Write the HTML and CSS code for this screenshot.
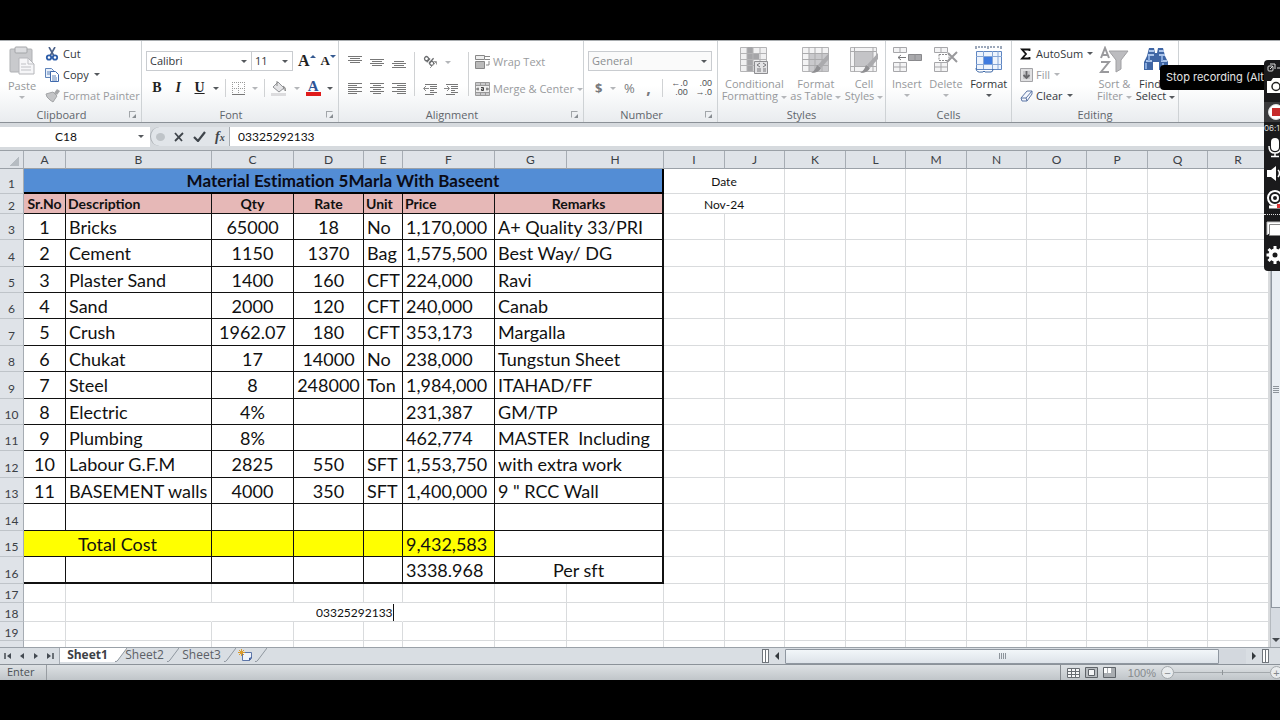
FILE: index.html
```
<!DOCTYPE html>
<html lang="en">
<head>
<meta charset="utf-8">
<title>Material Estimation</title>
<link rel="stylesheet" href="styles.css">
</head>
<body>
<main class="app">
<div class="ribbon">
  <section class="group g-clip">
    <div class="body">
      <button class="big off"><svg width="28" height="30" viewBox="0 0 28 30"><rect x="2" y="3" width="22" height="23" rx="1" fill="#c9cacd" stroke="#aeb0b3"/><rect x="7" y="1" width="12" height="6" rx="1" fill="#dcdde0" stroke="#a3a5a8"/><path d="M11 12h9l6 6v10h-15z" fill="#f6f6f8" stroke="#b5b6ba"/><path d="M20 12v6h6M13 18h5M13 21h10M13 24h10" fill="none" stroke="#c0c1c5"/></svg><span>Paste</span><i class="dn"></i></button>
      <div class="stack">
        <button class="tool"><svg width="16" height="14" viewBox="0 0 16 14"><path d="M4 0l5 9M10 0L5 9" stroke="#4b6189" stroke-width="1.6"/><circle cx="4" cy="10.500" r="2.200" fill="none" stroke="#2c5ca8" stroke-width="1.800"/><circle cx="10" cy="10.500" r="2.200" fill="none" stroke="#2c5ca8" stroke-width="1.800"/></svg>Cut</button>
        <button class="tool"><svg width="16" height="14" viewBox="0 0 16 14"><path d="M.5.500h6l2 2v7h-8z" fill="#e8f0fb" stroke="#5f83b9"/><path d="M2 4h4M2 6h3" stroke="#5f83b9"/><path d="M5.500 3.500h5l3 3v7h-8z" fill="#fff" stroke="#3f69ac"/><path d="M7 8h4M7 10h5M7 12h5" stroke="#5f83b9"/></svg>Copy<i class="dn"></i></button>
        <button class="tool off"><svg width="16" height="14" viewBox="0 0 16 14"><path d="M9 4l3-4 3 2-3 4z" fill="#a6a7a9"/><path d="M1 5l7-2 4 4-4 6-3-2-3-3z" fill="#c3c4c6" stroke="#a3a5a7"/></svg>Format Painter</button>
      </div>
    </div>
    <h2>Clipboard</h2><span class="launch"></span>
  </section>
  <section class="group g-font">
    <div class="lines">
      <div class="line">
        <label class="drop"><select class="font-name" aria-label="Font"><option>Calibri</option></select></label><label class="drop"><select class="font-size" aria-label="Font size"><option>11</option></select></label>
        <button class="glyph grow" aria-label="Grow font">A<i class="up"></i></button>
        <button class="glyph shrink" aria-label="Shrink font">A<i class="dnb"></i></button>
      </div>
      <div class="line spread">
        <button class="glyph biu">B</button><button class="glyph biu it">I</button><button class="glyph biu un">U</button><i class="dn"></i><span class="sep"></span>
        <button aria-label="Borders"><svg width="13" height="13" viewBox="0 0 13 13"><path d="M.5 0v12M6.500 0v12M12.500 0v12M0 .5h13M0 6.500h13" stroke="#9a9a9a" stroke-dasharray="1 1"/><path d="M0 12.500h13" stroke="#777"/></svg></button><i class="dn pale"></i><span class="sep"></span>
        <button aria-label="Fill color"><svg width="16" height="15" viewBox="0 0 16 15"><path d="M2 6l5-5 6 6-5 4z" fill="#e4e4e6" stroke="#909296"/><path d="M6 0v5M12 5q3 1 2.500 5q-2-1-1.500-4" fill="none" stroke="#888"/><path d="M0 12h15v3H0z" fill="#dcdcde"/></svg></button><i class="dn pale"></i>
        <button class="glyph fc" aria-label="Font color">A</button><i class="dn"></i>
      </div>
    </div>
    <h2>Font</h2><span class="launch"></span>
  </section>
  <section class="group g-align">
    <div class="cols">
      <div class="pad3">
        <button aria-label="Top align"><svg width="14" height="14" viewBox="0 0 14 14"><path d="M0 1.500h14M2 3.500h10M0 5.500h14M2 7.500h10" stroke="#777"/></svg></button>
        <button aria-label="Middle align"><svg width="14" height="14" viewBox="0 0 14 14"><path d="M0 4.500h14M2 6.500h10M0 8.500h14M2 10.500h10" stroke="#777"/></svg></button>
        <button aria-label="Bottom align"><svg width="14" height="14" viewBox="0 0 14 14"><path d="M2 6.500h10M0 8.500h14M2 10.500h10M0 12.500h14" stroke="#777"/></svg></button>
        <button aria-label="Align left"><svg width="14" height="12" viewBox="0 0 14 12"><path d="M0 .5h14M0 2.500h9M0 4.500h14M0 6.500h9M0 8.500h14M0 10.500h9" stroke="#777"/></svg></button>
        <button aria-label="Center"><svg width="14" height="12" viewBox="0 0 14 12"><path d="M0 .5h14M3 2.500h8M0 4.500h14M3 6.500h8M0 8.500h14M3 10.500h8" stroke="#777"/></svg></button>
        <button aria-label="Align right"><svg width="14" height="12" viewBox="0 0 14 12"><path d="M0 .5h14M5 2.500h9M0 4.500h14M5 6.500h9M0 8.500h14M5 10.500h9" stroke="#777"/></svg></button>
      </div>
      <span class="sep"></span>
      <div class="pad2">
        <div class="line"><button aria-label="Orientation"><svg width="16" height="14" viewBox="0 0 16 14"><g fill="none" stroke="#6c6e70" stroke-width="1.300" transform="rotate(42 5 5)"><circle cx="3" cy="5" r="2"/><path d="M5.500 2.500v5M8 0v7"/><circle cx="10" cy="5" r="2"/></g><path d="M7 13l6-6M13.500 9.500v-3h-3" stroke="#999" fill="none"/></svg></button><i class="dn pale"></i></div>
        <div class="line"><button aria-label="Decrease indent"><svg width="15" height="13" viewBox="0 0 15 13"><path d="M2 1.500h12M7 3.500h7M7 5.500h7M7 7.500h4M7 9.500h7M2 11.500h9" stroke="#777"/><path d="M6 5.500H1M3 3L.5 5.500 3 8" stroke="#888" fill="none"/></svg></button><button aria-label="Increase indent"><svg width="15" height="13" viewBox="0 0 15 13"><path d="M2 1.500h12M7 3.500h7M7 5.500h7M7 7.500h4M7 9.500h7M2 11.500h9" stroke="#777"/><path d="M0 5.500h5M3 3l2.500 2.500L3 8" stroke="#888" fill="none"/></svg></button></div>
      </div>
      <span class="sep"></span>
      <div class="pad1">
        <button class="tool off"><svg width="15" height="14" viewBox="0 0 15 14"><path d="M.5.5h9v4h-9z" fill="#eee" stroke="#888"/><path d="M10 1.500h5M10 4.500h5M14 6v4h-3" stroke="#888" fill="none"/><path d="M.5 6.500h9v7h-9z" fill="#bbb" stroke="#888"/></svg>Wrap Text</button>
        <button class="tool off"><svg width="15" height="14" viewBox="0 0 15 14"><path d="M.5.500h14v13h-14z" fill="#c9c9cb" stroke="#999"/><path d="M1 4h13v6H1z" fill="#efefef"/><path d="M0 3.500h15M0 10.500h15M5.500 0v3M10.500 0v3M5.500 11v3M10.500 11v3" stroke="#999"/><path d="M1 7h3M11 7h3M3 5.500v3M12 5.500v3" stroke="#666"/><path d="M6 5.500h2.500v3H6.500v-1.500h2" fill="none" stroke="#444"/></svg>Merge &amp; Center<i class="dn pale"></i></button>
      </div>
    </div>
    <h2>Alignment</h2><span class="launch"></span>
  </section>
  <section class="group g-num">
    <div class="lines">
      <label class="drop general"><select aria-label="Number format"><option>General</option></select></label>
      <div class="line spread num">
        <button>$</button><i class="dn pale"></i><button class="pc">%</button><button class="comma">,</button><span class="sep"></span>
        <button class="dec"><span>←.0</span><span>.00</span></button><button class="dec"><span>.00</span><span>→.0</span></button>
      </div>
    </div>
    <h2>Number</h2><span class="launch"></span>
  </section>
  <section class="group g-styles">
    <div class="body">
      <button class="big off"><svg width="30" height="28" viewBox="0 0 30 28"><path d="M1.500 1.500h26v24h-26z" fill="#f0f0f1" stroke="#b4b4b6"/><path d="M8 1h6v24H8zM14 8h6v6h-6z" fill="#a5a5a8"/><path d="M1 7.500h26M1 13.500h26M1 19.500h26M8 1v25M14 1v25M21 1v25" stroke="#b4b4b6" fill="none"/><path d="M15.500 15.500h13v12h-13z" fill="#e3e3e5" stroke="#8e8e91"/><path d="M21 17l-3 2 3 2M18 23h4M18 25h4M24 17l3 2-3 2M24 23h3M24 25h3" stroke="#77777a" fill="none"/></svg><span>Conditional<br>Formatting<i class="dn"></i></span></button>
      <button class="big off"><svg width="30" height="28" viewBox="0 0 30 28"><path d="M1.500 1.500h26v24h-26z" fill="#f3f3f4" stroke="#b4b4b6"/><path d="M8 7h19v18H8z" fill="#c9c9cc"/><path d="M1 7.500h26M1 13.500h26M1 19.500h26M8 1v25M14 1v25M21 1v25" stroke="#ababad" fill="none"/><path d="M28 7v6l-8 9-3-3z" fill="#aaaaad"/><path d="M16 19l4 3q-2 5-10 5 4-2 6-8z" fill="#8f8f92"/></svg><span>Format<br>as Table<i class="dn"></i></span></button>
      <button class="big off"><svg width="30" height="28" viewBox="0 0 30 28"><path d="M1.500 1.500h26v24h-26z" fill="#f3f3f4" stroke="#b4b4b6"/><path d="M6 6h18v14H6z" fill="#c4c4c7"/><path d="M1 5.500h26M1 20.500h26M5.500 1v25M24 1v25" stroke="#ababad" fill="none"/><path d="M29 7v6l-8 9-3-3z" fill="#aaaaad"/><path d="M17 19l4 3q-2 5-10 5 4-2 6-8z" fill="#8f8f92"/></svg><span>Cell<br>Styles<i class="dn"></i></span></button>
    </div>
    <h2>Styles</h2>
  </section>
  <section class="group g-cells">
    <div class="body">
      <button class="big off"><svg width="30" height="28" viewBox="0 0 30 28"><path d="M1.500 1.500h13v5h-13zM8 1v6M1.500 16.500h13v9h-13zM1 21h14M8 16v10" fill="#f4f4f5" stroke="#a7a7aa"/><path d="M16.500 8.500h13v6h-13z" fill="#a9a9ac" stroke="#89898c"/><path d="M23 8v7" stroke="#909093"/><path d="M14 11.500H6M9 9l-3 2.500L9 14" stroke="#77777a" fill="none"/></svg><span>Insert</span><i class="dn"></i></button>
      <button class="big off"><svg width="30" height="28" viewBox="0 0 30 28"><path d="M3.500 1.500h13v5h-13zM10 1v6M3.500 16.500h13v9h-13zM3 21h14M10 16v10" fill="#f4f4f5" stroke="#a7a7aa"/><path d="M8 8.500h10v6H8z" fill="none" stroke="#88888b" stroke-dasharray="2 1"/><path d="M17 7l9 9M26 6l-10 10" stroke="#99999c" stroke-width="2"/></svg><span>Delete</span><i class="dn"></i></button>
      <button class="big"><svg width="30" height="28" viewBox="0 0 30 28"><path d="M2 0v3M5 0v2M8 0v2M11 0v2M14 0v3M17 0v2M20 0v2M24 0v2M27 0v3" stroke="#3b5276"/><path d="M2.500 5.500h25v18h-25z" fill="#eef4fd" stroke="#5f86c2"/><path d="M2 10.500h26M2 18.500h26M9.500 5v18M18.500 5v18M24 5v18" stroke="#86a6d6" fill="none"/><path d="M10 11h8v7h-8z" fill="#3f7be0"/><path d="M2 22q0 5 6 4h1q1-2 2 0h6q2 0 2-3" fill="none" stroke="#3e68a6"/></svg><span>Format</span><i class="dn"></i></button>
    </div>
    <h2>Cells</h2>
  </section>
  <section class="group g-edit">
    <div class="body">
      <div class="stack">
        <button class="tool"><svg width="13" height="14" viewBox="0 0 13 14"><path d="M9.500 4V2.500H2l4 4.500-4 4.500h7.500V10" fill="none" stroke="#111" stroke-width="1.800"/></svg>AutoSum<i class="dn"></i></button>
        <button class="tool off"><svg width="13" height="14" viewBox="0 0 13 14"><path d="M.5.500h12v13H.5z" fill="#e0e0e2" stroke="#a3a3a6"/><path d="M3 3h7v8H3z" fill="#c5c5c8"/><path d="M6.500 3v6M3.500 7l3 3 3-3" stroke="#66666a" stroke-width="1.800" fill="none"/></svg>Fill<i class="dn"></i></button>
        <button class="tool"><svg width="13" height="14" viewBox="0 0 13 14"><path d="M1 9l6-7h5v3l-5 7H2z" fill="#f4f7fd" stroke="#5d76a5"/><path d="M1 9h5l1 3M6 9l6-7" fill="none" stroke="#5d76a5"/></svg>Clear<i class="dn"></i></button>
      </div>
      <button class="big off"><svg width="30" height="28" viewBox="0 0 30 28"><path d="M2 12L6 2l4 10M3.500 9h5M2 16h8L2 26h8" stroke="#9a9a9d" stroke-width="2" fill="none"/><path d="M10 5h19l-7 9v9l-5 3V14z" fill="#bcbcbf" stroke="#a0a0a3"/></svg><span>Sort &amp;<br>Filter<i class="dn"></i></span></button>
      <button class="big"><svg width="30" height="28" viewBox="0 0 30 28"><path d="M8 2h5l1 5h2l1-5h5l2 8 3 6v8h-9v-8h-6v8H3v-8l3-6z" fill="#3f66a5"/><path d="M8 5h5M18 5h5M7 9h6M18 9h6M5 15h6M20 15h6" stroke="#a9c3ea" stroke-width="2"/><path d="M5 17v6M8 10v5M21 10v5M22 17v6" stroke="#86a8dc" stroke-width="2"/></svg><span>Find &amp;<br>Select<i class="dn"></i></span></button>
    </div>
    <h2>Editing</h2>
  </section>
</div>

<div class="formula">
  <label class="drop namebox"><input value="C18" aria-label="Name box"></label>
  <div class="fx"><i class="knob"></i>
    <button aria-label="Cancel"><svg width="10" height="10" viewBox="0 0 10 10"><path d="M1 1l7 8M9 1L1 9" stroke="#3f454b" stroke-width="1.800"/></svg></button>
    <button aria-label="Enter"><svg width="13" height="11" viewBox="0 0 13 11"><path d="M1 6l4 4 7-9" stroke="#3f454b" stroke-width="2.200" fill="none"/></svg></button>
    <button class="fxb">f<small>x</small></button>
  </div>
  <input class="finput" value="03325292133" aria-label="Formula bar">
</div>

<div class="sheet">
<div class="grid">
<table>
<colgroup><col class="w24"><col class="w42"><col class="w146"><col class="w82"><col class="w70"><col class="w39"><col class="w92"><col class="w72"><col class="w97"><col class="w61"><col class="w60"><col class="w61"><col class="w60"><col class="w61"><col class="w60"><col class="w60"><col class="w61"><col class="w60"><col class="w61"><col></colgroup>
<thead><tr><th class="corner"><i></i><th>A<th>B<th>C<th>D<th>E<th>F<th>G<th>H<th>I<th>J<th>K<th>L<th>M<th>N<th>O<th>P<th>Q<th>R<th></thead>
<tbody>
<tr class="r25"><th>1<td class="title" colspan="8">Material Estimation 5Marla With Baseent<td class="note" colspan="2">Date<td><td><td><td><td><td><td><td><td></tr>
<tr class="r20 head"><th>2<td class="k c">Sr.No<td class="k">Description<td class="k c">Qty<td class="k c">Rate<td class="k">Unit<td class="k">Price<td class="k e c" colspan="2">Remarks<td class="note" colspan="2">Nov-24<td><td><td><td><td><td><td><td><td></tr>
<tr class="r26"><th>3<td class="k c">1<td class="k">Bricks<td class="k c">65000<td class="k c">18<td class="k">No<td class="k">1,170,000<td class="k e" colspan="2">A+ Quality 33/PRI<td><td><td><td><td><td><td><td><td><td><td></tr>
<tr class="r27"><th>4<td class="k c">2<td class="k">Cement<td class="k c">1150<td class="k c">1370<td class="k">Bag<td class="k">1,575,500<td class="k e" colspan="2">Best Way/ DG<td><td><td><td><td><td><td><td><td><td><td></tr>
<tr class="r26"><th>5<td class="k c">3<td class="k">Plaster Sand<td class="k c">1400<td class="k c">160<td class="k">CFT<td class="k">224,000<td class="k e" colspan="2">Ravi<td><td><td><td><td><td><td><td><td><td><td></tr>
<tr class="r26"><th>6<td class="k c">4<td class="k">Sand<td class="k c">2000<td class="k c">120<td class="k">CFT<td class="k">240,000<td class="k e" colspan="2">Canab<td><td><td><td><td><td><td><td><td><td><td></tr>
<tr class="r27"><th>7<td class="k c">5<td class="k">Crush<td class="k c">1962.07<td class="k c">180<td class="k">CFT<td class="k">353,173<td class="k e" colspan="2">Margalla<td><td><td><td><td><td><td><td><td><td><td></tr>
<tr class="r26"><th>8<td class="k c">6<td class="k">Chukat<td class="k c">17<td class="k c">14000<td class="k">No<td class="k">238,000<td class="k e" colspan="2">Tungstun Sheet<td><td><td><td><td><td><td><td><td><td><td></tr>
<tr class="r27"><th>9<td class="k c">7<td class="k">Steel<td class="k c">8<td class="k c">248000<td class="k">Ton<td class="k">1,984,000<td class="k e" colspan="2">ITAHAD/FF<td><td><td><td><td><td><td><td><td><td><td></tr>
<tr class="r26"><th>10<td class="k c">8<td class="k">Electric<td class="k c">4%<td class="k"><td class="k"><td class="k">231,387<td class="k e" colspan="2">GM/TP<td><td><td><td><td><td><td><td><td><td><td></tr>
<tr class="r26"><th>11<td class="k c">9<td class="k">Plumbing<td class="k c">8%<td class="k"><td class="k"><td class="k">462,774<td class="k e" colspan="2">MASTER&nbsp; Including<td><td><td><td><td><td><td><td><td><td><td></tr>
<tr class="r27"><th>12<td class="k c">10<td class="k">Labour G.F.M<td class="k c">2825<td class="k c">550<td class="k">SFT<td class="k">1,553,750<td class="k e" colspan="2">with extra work<td><td><td><td><td><td><td><td><td><td><td></tr>
<tr class="r26"><th>13<td class="k c">11<td class="k">BASEMENT walls<td class="k c">4000<td class="k c">350<td class="k">SFT<td class="k">1,400,000<td class="k e" colspan="2">9 " RCC Wall<td><td><td><td><td><td><td><td><td><td><td></tr>
<tr class="r27"><th>14<td class="k"><td class="k"><td class="k"><td class="k"><td class="k"><td class="k"><td class="k e" colspan="2"><td><td><td><td><td><td><td><td><td><td><td></tr>
<tr class="r26"><th>15<td class="k y c" colspan="2">Total Cost<td class="k y"><td class="k y"><td class="k y"><td class="k y">9,432,583<td class="k e" colspan="2"><td><td><td><td><td><td><td><td><td><td><td></tr>
<tr class="r27 last"><th>16<td class="k"><td class="k"><td class="k"><td class="k"><td class="k"><td class="k">3338.968<td class="k e c" colspan="2">Per sft<td><td><td><td><td><td><td><td><td><td><td></tr>
<tr class="r19"><th>17<td><td><td><td><td><td><td><td><td><td><td><td><td><td><td><td><td><td><td></tr>
<tr class="r19"><th>18<td><td class="open"><td class="edit" colspan="3"><input value="03325292133" aria-label="Cell C18"><td><td><td><td><td><td><td><td><td><td><td><td><td><td></tr>
<tr class="r19"><th>19<td><td><td><td><td><td><td><td><td><td><td><td><td><td><td><td><td><td><td></tr>
<tr class="r19"><th><td><td><td><td><td><td><td><td><td><td><td><td><td><td><td><td><td><td><td></tr>
</tbody>
</table>
</div>
<div class="vscroll"><div class="vthumb"><i class="grip"></i></div><i class="dnb"></i></div>
</div>

<div class="tabs">
  <div class="nav">
    <button aria-label="First sheet"><svg width="8" height="8" viewBox="0 0 8 8"><path d="M1 1v6" stroke="#444b52" stroke-width="1.500"/><path d="M7 1v6L3 4z" fill="#444b52"/></svg></button>
    <button aria-label="Previous sheet"><svg width="8" height="8" viewBox="0 0 8 8"><path d="M6 1v6L2 4z" fill="#444b52"/></svg></button>
    <button aria-label="Next sheet"><svg width="8" height="8" viewBox="0 0 8 8"><path d="M2 1v6l4-3z" fill="#444b52"/></svg></button>
    <button aria-label="Last sheet"><svg width="8" height="8" viewBox="0 0 8 8"><path d="M7 1v6" stroke="#444b52" stroke-width="1.500"/><path d="M1 1v6l4-3z" fill="#444b52"/></svg></button>
  </div>
  <button class="tab on">Sheet1</button><svg class="first" width="12" height="14" viewBox="0 0 12 14"><path d="M0 0h12L3 12q-1 1-3 1z" fill="#fff"/><path d="M12 0L3 12q-1 2-3 1.500" fill="none" stroke="#8f979f"/></svg>
  <button class="tab">Sheet2</button><svg width="12" height="14" viewBox="0 0 12 14"><path d="M12 0L3 12q-1 2-3 1.500" fill="none" stroke="#8f979f"/></svg>
  <button class="tab">Sheet3</button><svg width="12" height="14" viewBox="0 0 12 14"><path d="M12 0L3 12q-1 2-3 1.500" fill="none" stroke="#8f979f"/></svg>
  <button class="tab new" aria-label="Insert sheet"><svg width="15" height="13" viewBox="0 0 15 13"><path d="M4.500 3.500h9v6l-2 2h-7z" fill="#eef3fb" stroke="#5d76a8"/><path d="M14 8l-3 4v-3z" fill="#34559a"/><path d="M3.500 0v7M0 3.500h7M1 1l5 5M6 1L1 6" stroke="#d99a2b"/></svg></button><svg width="12" height="14" viewBox="0 0 12 14"><path d="M12 0L3 12q-1 2-3 1.500" fill="none" stroke="#8f979f"/></svg>
  <div class="hscroll"><i class="split"></i><svg width="16" height="10" viewBox="0 0 16 10"><path d="M10 1v8L6 5z" fill="#33383d"/></svg><div class="htrack"><div class="hthumb"><i class="grip v"></i></div></div><svg width="16" height="10" viewBox="0 0 16 10"><path d="M6 1v8l4-4z" fill="#33383d"/></svg><i class="split"></i></div>
</div>

<div class="status">
  <span class="mode">Enter</span>
  <div class="views">
    <button aria-label="Normal"><svg width="13" height="10" viewBox="0 0 13 10"><path d="M.5.500h12v9H.5zM0 3.500h13M0 6.500h13M4.500 0v10M8.500 0v10" fill="#f6f7f8" stroke="#686d72"/></svg></button>
    <button aria-label="Page layout"><svg width="13" height="11" viewBox="0 0 13 11"><path d="M.5.500h12v10H.5z" fill="#b9bdc1" stroke="#5f6469"/><path d="M3.500 2.500h6v6h-6z" fill="#f5f6f7" stroke="#5f6469"/></svg></button>
    <button aria-label="Page break preview"><svg width="13" height="11" viewBox="0 0 13 11"><path d="M.5.500h12v10H.5z" fill="#a9adb1" stroke="#5f6469"/><path d="M1 1h3v5H1zM5 1h3v5H5z" fill="#fff"/></svg></button>
    <span class="zoomv">100%</span>
    <button class="round" aria-label="Zoom out">−</button><i class="rail"></i><button class="round" aria-label="Zoom in">+</button>
  </div>
</div>

<div class="tip">Stop recording (Alt</div>
<aside class="rec">
  <svg width="24" height="12" viewBox="0 0 24 12"><rect x="4" y="4" width="5" height="5" rx="1" fill="none" stroke="#ddd"/><path d="M6 2h5v5M6 7l3-3M13 6h5" stroke="#ddd" fill="none"/></svg>
  <svg width="24" height="20" viewBox="0 0 24 20"><path d="M3 5h4l2-3h8l2 3h4v12H3z" fill="#fff"/><circle cx="12" cy="10.500" r="4" fill="#fff" stroke="#222" stroke-width="1.500"/></svg>
  <div class="stop"><svg width="24" height="20" viewBox="0 0 24 20"><circle cx="12" cy="10" r="7.500" fill="#fff" stroke="#ddd"/><rect x="8" y="6" width="9" height="8" fill="#c62a2a"/></svg></div>
  <span>06:1</span>
  <svg width="24" height="20" viewBox="0 0 24 20"><rect x="7" y="0" width="8" height="13" rx="4" fill="#fff"/><path d="M5 8q0 7 6 7t6-7M11 15v3M7 18.500h8" stroke="#fff" stroke-width="1.500" fill="none"/></svg>
  <svg width="24" height="20" viewBox="0 0 24 20"><path d="M3 6h4l5-4v15l-5-4H3z" fill="#fff"/><path d="M14 6q3 3 0 7" stroke="#fff" stroke-width="1.500" fill="none"/></svg>
  <svg width="24" height="20" viewBox="0 0 24 20"><circle cx="11" cy="8" r="7" fill="none" stroke="#fff" stroke-width="2"/><circle cx="11" cy="8" r="3" fill="none" stroke="#fff" stroke-width="2"/><path d="M5 17h12" stroke="#fff" stroke-width="3"/><path d="M13 14h5v4h-5z" fill="#d33"/></svg>
  <i class="dots"></i>
  <svg width="24" height="20" viewBox="0 0 24 20"><path d="M3 16V3h15v3" fill="#fff" stroke="#bbb"/><path d="M5.500 5.500h16v11h-16z" fill="#fff" stroke="#888"/></svg>
  <svg width="24" height="20" viewBox="0 0 24 20"><circle cx="11" cy="10" r="4.500" fill="none" stroke="#fff" stroke-width="4"/><path d="M11 1v4M11 15v4M2.500 10h4M16 10h4M4.500 4l3 3M15 14l3 3M4.500 16l3-3M15 6l3-3" stroke="#fff" stroke-width="3"/></svg>
</aside>
</main>
</body>
</html>
```
FILE: styles.css
```
* { box-sizing: border-box; font-variant-ligatures: none; }
body {
  margin: 0;
  padding: 40px 0;
  height: 100vh;
  background: #000;
  font: 11px/12px "Open Sans", "Noto Sans", sans-serif;
  color: #33373b;
  overflow: hidden;
}
button, select, input { font: inherit; color: inherit; background: none; border: 0; padding: 0; margin: 0; border-radius: 0; appearance: none; outline: 0; }
button { display: flex; align-items: center; white-space: nowrap; }
svg { flex: none; display: block; }
.app { position: relative; display: flex; flex-direction: column; height: 100%; background: #d6dade; overflow: hidden; }

/* ribbon */
.ribbon { display: flex; flex: none; height: 83px; border-top: 1px solid #a9adb0; border-bottom: 1px solid #8b9197; background: linear-gradient(#fff 55%, #e9ecef); }
.group { position: relative; display: flex; flex-direction: column; flex: none; height: 81px; border-right: 1px solid #ced2d5; padding-top: 2px; }
.group h2 { margin: auto 0 0; font: inherit; line-height: 14px; text-align: center; color: #5f656b; }
.g-clip { width: 142px; }
.g-font { width: 197px; }
.g-align { width: 245px; }
.g-num { width: 134px; }
.g-styles { width: 168px; }
.g-cells { width: 126px; }
.g-edit { width: 167px; }
.g-clip h2, .g-font h2, .g-align h2, .g-num h2 { padding-right: 18px; }
.body { display: flex; padding: 0 0 0 2px; justify-content: space-around; }
.g-clip .body { justify-content: start; gap: 9px; padding-left: 8px; }
.g-edit .body { justify-content: start; gap: 4px; padding-left: 8px; }
.stack { display: flex; flex-direction: column; }
.g-edit .stack { width: 73px; }
.tool { gap: 2px; height: 21px; }
.g-edit .tool { gap: 3px; }
.g-edit .tool .dn { margin: 0 1px; }
.off { color: #999b9e; }
.big { flex-direction: column; padding-top: 3px; color: #33373b; line-height: 12px; gap: 2px; }
.big.off { color: #96989b; }
.big > span { padding-top: 2px; }
.big i { display: inline-block; }
.dn { flex: none; border: 3px solid transparent; border-top-color: #55595d; border-bottom: 0; margin: 0 3px; vertical-align: middle; }
.dn.pale, .off .dn { border-top-color: #b4b6b9; }
.big span .dn { margin-right: 0; }
.big > .dn { margin: 2px 0; }
.dnb { border: 4px solid transparent; border-top-color: #44494e; border-bottom: 0; }
.launch { position: absolute; right: 5px; bottom: 4px; width: 7px; height: 7px; border: 1px solid #a2a6aa; border-right-color: transparent; border-bottom-color: transparent; }
.launch::after { content: ""; position: absolute; right: -1px; bottom: -1px; border: 2px solid #888d92; border-top-color: transparent; border-left-color: transparent; }
.sep { width: 1px; height: 18px; background: #d0d2d4; flex: none; }

.lines { display: flex; flex-direction: column; gap: 7px; padding: 8px 5px 0 4px; }
.line { display: flex; align-items: center; height: 20px; }
.spread { justify-content: space-between; padding: 0 0 0 4px; }
.drop { position: relative; display: block; height: 20px; border: 1px solid #c9ccd0; background: #fff; }
.drop + .drop { border-left: 0; }
.drop::after { content: ""; position: absolute; right: 4px; top: 8px; border: 3px solid transparent; border-top-color: #55595d; border-bottom: 0; pointer-events: none; }
.drop select { display: block; height: 18px; padding-left: 3px; }
.font-name { width: 104px; }
.font-size { width: 40px; }
.glyph { font: bold 14px/18px "Liberation Serif", serif; color: #222; }
.biu { width: 14px; justify-content: center; }
.spread .biu + .biu { margin-left: 1px; }
.grow { font-size: 16px; margin-left: 5px; }
.shrink { font-size: 13px; margin-left: 5px; }
.grow i, .shrink i { border-width: 3px; margin-bottom: 10px; }
.up { border: 3px solid transparent; border-bottom-color: #355a91; }
.grow .up { border-top: 0; }
.shrink .dnb { border-top-color: #355a91; border-bottom: 0; }
.it { font-style: italic; }
.un { text-decoration: underline; }
.fc { font-size: 15px; color: #2f5597; border-bottom: 4px solid #e01b1b; line-height: 12px; padding: 0 2px; }
.spread .dn { margin: 0; }

.cols { display: flex; padding: 9px 0 0 9px; height: 62px; }
.cols > .sep { height: 44px; }
.pad3 { display: grid; grid-template-columns: repeat(3, 22px); grid-template-rows: 20px 26px; align-items: center; align-content: start; }
.pad3 button { height: 18px; }
.pad3 button:nth-child(n+4) { margin-top: 8px; }
.pad2 { width: 53px; padding-left: 8px; display: flex; flex-direction: column; gap: 7px; }
.pad2 .line { gap: 6px; }
.pad2 .dn { margin: 0; }
.pad1 { padding-left: 6px; display: flex; flex-direction: column; gap: 7px; }
.pad1 .tool { height: 20px; gap: 3px; }
.pad1 .dn { margin: 0; }

.general { color: #8b8e91; background: #fafafa; }
.general select { width: 100%; }
.num { font-weight: bold; color: #77797c; font-size: 13px; padding-left: 7px; }
.pc { font-weight: normal; }
.comma { width: 12px; justify-content: center; font-size: 16px; }
.dec { flex-direction: column; align-items: flex-end; font: 9px/9px "Liberation Sans", sans-serif; color: #505255; }

/* formula bar */
.formula { display: flex; flex: none; height: 28px; padding: 4px 0; background: #d6dade; border-bottom: 1px solid #9aa0a6; font: 12px/18px Lato, sans-serif; color: #111; }
.namebox { width: 150px; border: 0; }
.namebox input { width: 132px; height: 19px; text-align: center; }
.drop.namebox::after { right: 6px; }
.fx { display: flex; align-items: center; width: 80px; gap: 9px; padding-left: 5px; background: #e1e5e9; border-radius: 10px 0 0 10px; border: 1px solid #a9aeb3; border-width: 0 1px; flex: none; }
.knob { width: 9px; height: 8px; border-radius: 50%; background: #bfc4c8; }
.fxb { font: italic bold 14px/16px "Liberation Serif", serif; color: #3f454b; }
.fxb small { font-size: 10px; padding-top: 3px; }
.finput { flex: 1; min-width: 0; background: #fff; padding-left: 8px; }

/* sheet */
.sheet { display: flex; flex: 1; min-height: 0; background: #fff; }
.grid { flex: 1; min-width: 0; overflow: hidden; }
table { border-collapse: separate; border-spacing: 0; table-layout: fixed; width: 100%; }
.w24 { width: 24px; } .w42 { width: 42px; } .w146 { width: 146px; } .w82 { width: 82px; } .w70 { width: 70px; }
.w39 { width: 39px; } .w92 { width: 92px; } .w72 { width: 72px; } .w97 { width: 97px; } .w60 { width: 60px; } .w61 { width: 61px; }
th { background: #dfe3e8; font: 12px/14px Lato, sans-serif; color: #3b4045; padding: 0; border-right: 1px solid #a6acb3; border-bottom: 1px solid #9ba1a8; text-align: center; }
thead th { height: 18px; }
tbody th { border-bottom-color: #bfc4c9; vertical-align: bottom; }
.r25 th, .r26 th, .r27 th { padding-bottom: 2px; }
.corner i { display: block; margin: 2px 4px 0 auto; width: 10px; height: 10px; background: linear-gradient(135deg, transparent 50%, #b6bcc2 50%); }
td { padding: 0; border-right: 1px solid #d9dbdd; border-bottom: 1px solid #d9dbdd; white-space: nowrap; }
.r19 { height: 19px; } .r20 { height: 20px; } .r25 { height: 25px; } .r26 { height: 26px; } .r27 { height: 27px; }
td.k { border-color: #111; font: 18px/22px Lato, sans-serif; color: #111; padding-left: 3px; }
td.c { text-align: center; padding: 0; }
td.e { border-right-width: 2px; }
td.y { background: #ff0; }
td.title { background: #538dd5; border: solid #000; border-width: 0 2px 2px 0; font: bold 17px/20px Lato, sans-serif; color: #0b0b16; text-align: center; }
.head td.k { background: #e6b8b7; font: bold 14px/16px Lato, sans-serif; padding-left: 2px; }
.head td.c { padding: 0; }
.last td.k { border-bottom-width: 2px; }
td.note { font: 12px/16px Lato, sans-serif; color: #111; text-align: center; padding-top: 2px; }
td.title, td.k, td.note, th, .edit input { font-variant-ligatures: none; }
td.open, td.edit { border-right-color: transparent; }
.edit input { display: block; margin: 0 8px 0 auto; width: 78px; height: 17px; border-right: 1px solid #111; font: 12px/16px Lato, sans-serif; color: #111; }
.vscroll { display: flex; flex-direction: column; flex: none; width: 10px; padding-bottom: 5px; border-left: 1px solid #b5babf; background: #d6dbe1; align-items: center; overflow: hidden; }
.vthumb { display: flex; align-items: center; justify-content: center; flex: 1; width: 100%; margin: 20px 0 30px; background: #e9eef3; border: solid #8f97a0; border-width: 1px 0 1px 1px; }
.grip { width: 6px; height: 7px; background: repeating-linear-gradient(#8d949b 0 1px, transparent 1px 2px); }
.grip.v { width: 7px; height: 6px; background: repeating-linear-gradient(90deg, #8d949b 0 1px, transparent 1px 2px); }

/* sheet tabs */
.tabs { display: flex; flex: none; height: 18px; border-top: 1px solid #9aa1a8; border-bottom: 1px solid #8b9299; background: #d9dee3; }
.nav { display: flex; align-items: center; gap: 6px; width: 60px; padding-left: 4px; border-right: 1px solid #a6acb3; flex: none; }
.tab { height: 14px; width: 45px; justify-content: center; color: #5b6066; font-size: 12px; }
.tab.on { width: 55px; background: #fff; font-weight: bold; color: #3c4146; }
.tab.new { width: 19px; }
.first { margin-right: -5px; }
.hscroll { display: flex; align-items: center; margin-left: auto; width: 518px; padding-right: 11px; }
.split { width: 7px; height: 14px; border: 1px solid #70767c; background: linear-gradient(90deg, #fff 2px, #70767c 2px 3px, #fff 3px); flex: none; }
.htrack { flex: 1; height: 15px; padding-right: 27px; background: #d3d8de; }
.hthumb { display: flex; align-items: center; justify-content: center; height: 15px; border: 1px solid #8f97a0; border-radius: 1px; background: linear-gradient(#f2f6f9, #dde3e9); }

/* status bar */
.status { display: flex; flex: none; height: 15px; justify-content: space-between; background: linear-gradient(#dde1e4, #c0c5c9); color: #4c5156; }
.mode { padding: 1px 12px 0 7px; border-right: 1px solid #989da2; }
.views { display: flex; align-items: center; gap: 5px; border-left: 1px solid #84898e; padding-left: 6px; margin-right: -3px; font-family: "Liberation Sans", sans-serif; color: #85898d; }
.zoomv { padding: 0 0 0 7px; }
.round { width: 13px; height: 13px; border: 1px solid #a2a7ab; border-radius: 50%; background: #e9ecee; justify-content: center; }
.rail { width: 96px; height: 5px; margin: 0 -5px; background: linear-gradient(90deg, transparent 48px, #8f9498 48px 49px, transparent 49px), linear-gradient(transparent 2px, #a3a8ac 2px 3px, transparent 3px); }

/* screen recorder */
.tip { position: absolute; top: 25px; right: 15px; height: 25px; padding: 0 0 0 6px; width: 105px; border-radius: 4px 0 0 4px; background: #000; color: #e4e4e4; font: 11px/25px Inter, sans-serif; white-space: nowrap; }
.rec { position: absolute; top: 20px; right: 0; width: 16px; height: 211px; display: flex; flex-direction: column; gap: 6px; padding-top: 2px; border-radius: 4px 0 0 4px; background: #1a1a1c; color: #ddd; font: 8px/8px Inter, sans-serif; overflow: hidden; white-space: nowrap; }
.rec > span { margin-top: -4px; }
.rec > :nth-child(2) { margin-top: -4px; }
.stop { background: #3a3a3c; }
.dots { flex: none; border-top: 1px dotted #ddd; margin: -2px 0; }
```
